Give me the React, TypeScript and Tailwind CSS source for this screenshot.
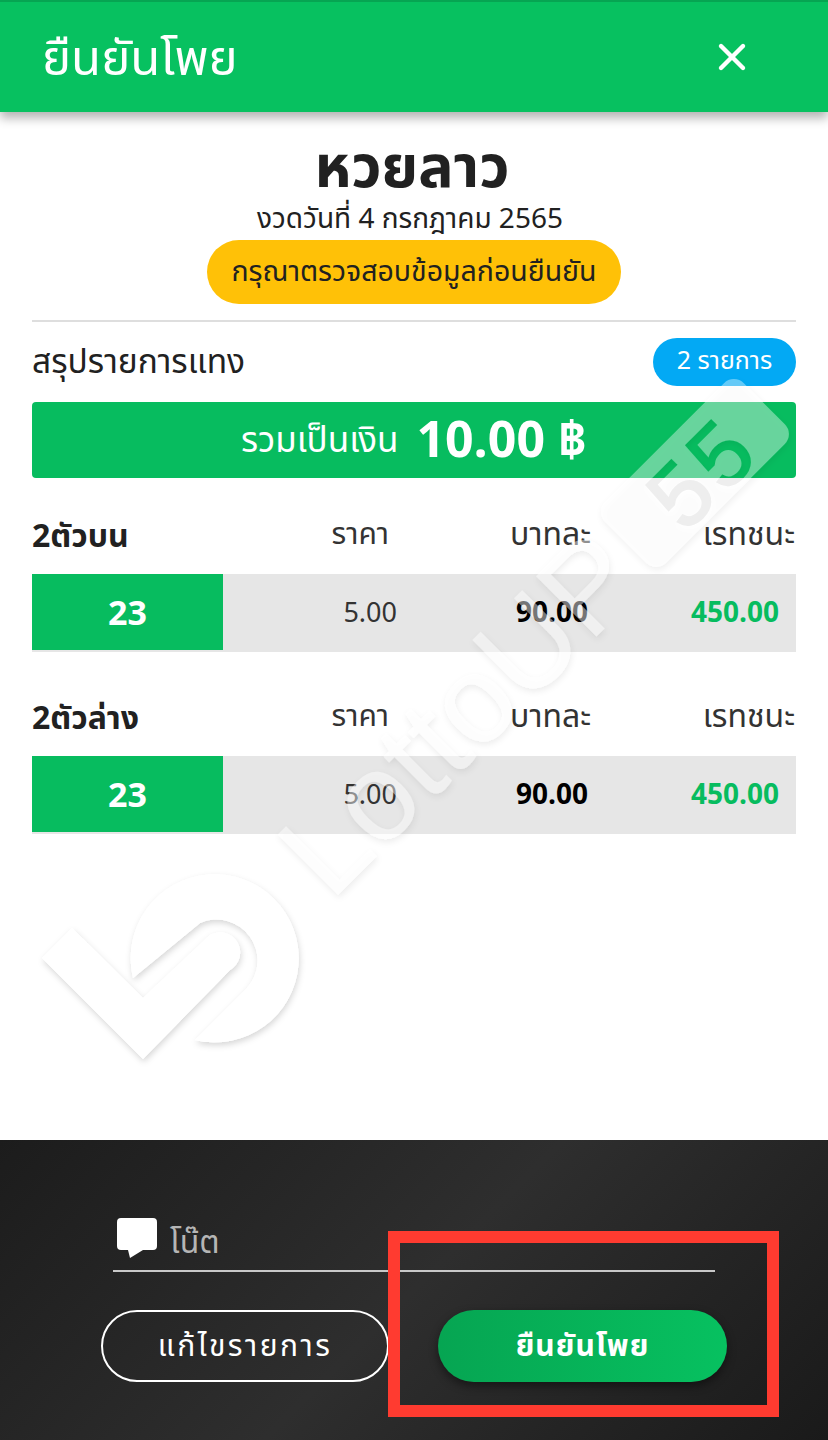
import React from 'react';
import { X } from 'lucide-react';

const thai = { fontFamily: '"Noto Sans Thai", "Noto Sans", "Liberation Sans", "DejaVu Sans", sans-serif' };
const latin = { fontFamily: '"Liberation Sans", sans-serif' };

const bets = [
  { label: '2ตัวบน', number: '23', price: '5.00', rate: '90.00', win: '450.00' },
  { label: '2ตัวล่าง', number: '23', price: '5.00', rate: '90.00', win: '450.00' },
];

// translucent brand mark that lies over the content, with a shadow only outside the shapes
const Watermark = () => (
  <svg className="absolute left-0 top-0 pointer-events-none" width="828" height="1140" viewBox="0 0 828 1140" fill="none">
    <defs>
      <filter id="wm" x="-10%" y="-10%" width="120%" height="120%">
        <feGaussianBlur in="SourceAlpha" stdDeviation="3" result="blur" />
        <feOffset in="blur" dx="1" dy="3" result="off" />
        <feComposite in="off" in2="SourceAlpha" operator="out" result="outer" />
        <feFlood floodColor="#000" floodOpacity="0.16" />
        <feComposite in2="outer" operator="in" result="shadow" />
        <feMerge>
          <feMergeNode in="shadow" />
          <feMergeNode in="SourceGraphic" />
        </feMerge>
      </filter>
      <mask id="badge" maskUnits="userSpaceOnUse" x="0" y="0" width="828" height="1140">
        <rect x="597" y="430" width="196" height="86" rx="14" transform="rotate(-45 695 473)" fill="#fff" />
        <text x="685" y="534" transform="rotate(-45 685 534)" fill="#000" stroke="#000" strokeWidth="2" fontSize="90" letterSpacing="6" style={latin}>55</text>
      </mask>
      <clipPath id="belowBar">
        <rect x="590" y="478" width="220" height="100" />
      </clipPath>
    </defs>
    <g filter="url(#wm)">
      <path d="M42 958 L72 928 L143 998 L210 935 A20 20 0 0 1 230 970 L143 1059 Z" fill="#fff" />
      <path d="M133 978 A84 84 0 1 1 195 1040 L247 988 A41 41 0 0 0 200 923 Z" fill="#fff" />
    </g>
    <g filter="url(#wm)">
      <text x="331" y="902" transform="rotate(-45 331 902)" fill="#fff" fillOpacity="0.45" fontSize="124" style={latin}>LottoUP</text>
    </g>
    <g filter="url(#wm)">
      <rect x="0" y="0" width="828" height="1140" fill="#fff" fillOpacity="0.38" mask="url(#badge)" />
    </g>
    <g clipPath="url(#belowBar)">
      <text x="685" y="534" transform="rotate(-45 685 534)" fill="#eeeeee" stroke="#eeeeee" strokeWidth="2" fontSize="90" letterSpacing="6" style={latin}>55</text>
    </g>
  </svg>
);

const BetBlock = ({ bet }: { bet: (typeof bets)[number] }) => (
  <div className="mb-[18px]">
    <div className="flex items-center h-[86px] pt-[8px]">
      <div className="w-[191px] pt-[4px] text-[32px] leading-[44px] font-bold text-[#212121]">{bet.label}</div>
      <div className="w-[166px] text-right text-[30px] leading-[40px] text-[#333]">ราคา</div>
      <div className="w-[202px] text-right text-[32px] leading-[40px] text-[#333]">บาทละ</div>
      <div className="flex-1 text-right text-[32px] leading-[40px] text-[#333] pr-px">เรทชนะ</div>
    </div>
    <div className="flex h-[78px] bg-[#e6e6e6]">
      <div className="w-[191px] h-[76px] pt-[4px] bg-[#07bc5f] flex items-center justify-center text-white text-[34px] font-bold">{bet.number}</div>
      <div className="w-[174px] h-[76px] pt-[4px] flex items-center justify-end text-[27px] text-[#333]">{bet.price}</div>
      <div className="w-[191px] h-[76px] pt-[4px] flex items-center justify-end text-[28px] font-bold text-black">{bet.rate}</div>
      <div className="flex-1 h-[76px] pt-[4px] flex items-center justify-end pr-[17px] text-[28px] font-bold text-[#07bc5f]">{bet.win}</div>
    </div>
  </div>
);

export default function App() {
  return (
    <div className="relative w-[828px] h-[1440px] bg-white overflow-hidden flex flex-col" style={thai}>
      <header className="relative z-10 h-[112px] shrink-0 bg-[#07c160] border-t-2 border-[#06a552] shadow-[0_6px_10px_rgba(0,0,0,0.3)] flex items-center justify-between pl-[42px] pr-[74px]">
        <h1 className="text-[49px] leading-[60px] pt-[6px] text-white">ยืนยันโพย</h1>
        <X className="text-white" size={44} strokeWidth={2.4} />
      </header>

      <main className="flex-1 px-[32px]">
        <div className="flex flex-col items-center pt-[24px]">
          <div className="mr-[4px] text-[59px] leading-[66px] font-bold text-[#212121]">หวยลาว</div>
          <div className="mr-[8px] text-[28px] leading-[36px] text-[#212121]">งวดวันที่ 4 กรกฎาคม 2565</div>
          <div className="mt-[2px] w-[414px] h-[64px] pt-[3px] rounded-full bg-[#ffc107] flex items-center justify-center text-[28.5px] text-[#212121]">
            กรุณาตรวจสอบข้อมูลก่อนยืนยัน
          </div>
        </div>
        <div className="mt-[16px] h-[2px] bg-[#dedede]" />
        <div className="mt-[16px] flex items-center justify-between h-[48px]">
          <div className="pt-[2px] text-[33.5px] leading-[46px] text-[#212121]">สรุปรายการแทง</div>
          <div className="w-[143px] h-[48px] rounded-full bg-[#03a9f4] flex items-center justify-center text-white text-[25px]">2 รายการ</div>
        </div>
        <div className="mt-[16px] h-[76px] rounded-[4px] bg-[#07bc5f] flex items-center justify-center gap-[18px] pt-[4px] text-white">
          <span className="text-[35px] leading-[60px]">รวมเป็นเงิน</span>
          <span className="text-[50px] leading-[60px] font-bold">10.00 ฿</span>
        </div>
        <div className="mt-[10px]">
          {bets.map((bet) => (
            <BetBlock key={bet.label} bet={bet} />
          ))}
        </div>
      </main>

      <Watermark />

      <footer className="relative h-[300px] shrink-0 bg-[linear-gradient(135deg,#1c1c1c_0%,#2e2e2e_50%,#1a1a1a_100%)]">
        <div className="pt-[76px] px-[113px]">
          <div className="flex items-center h-[56px] gap-[13px] pl-[4px] border-b-2 border-[#c8c8c8]">
            <svg width="40" height="40" viewBox="0 0 40 40" className="mb-[10px] shrink-0">
              <path d="M4 0h32a4 4 0 0 1 4 4v24a4 4 0 0 1-4 4H26L13 40 11 32H4a4 4 0 0 1-4-4V4a4 4 0 0 1 4-4z" fill="#fff" />
            </svg>
            <span className="text-[32px] leading-[44px] text-[#b5b5b5]">โน๊ต</span>
          </div>
        </div>
        <div className="flex mt-[38px] pl-[101px] gap-[49px]">
          <button className="w-[288px] h-[72px] pt-[3px] rounded-full border-2 border-white text-white text-[30px] tracking-[2.5px]">แก้ไขรายการ</button>
          <button className="w-[289px] h-[72px] pt-[3px] rounded-full bg-[linear-gradient(90deg,#06a552,#07c160)] text-white text-[30px] font-bold tracking-[1px] shadow-[0_4px_10px_rgba(0,0,0,0.45)]">ยืนยันโพย</button>
        </div>
        <div className="absolute left-[388px] top-[91px] w-[391px] h-[186px] border-[12px] border-[#ff3b30]" />
      </footer>
    </div>
  );
}
